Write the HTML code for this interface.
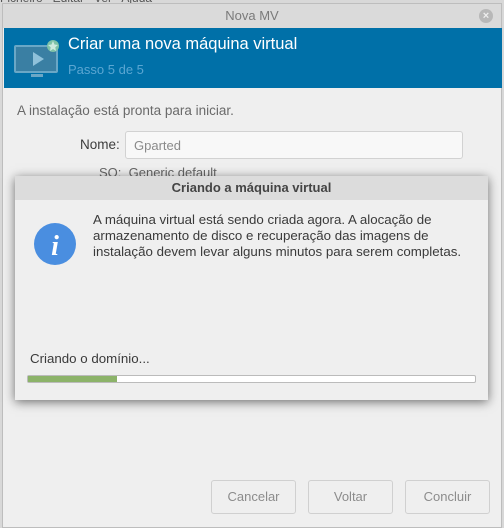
<!DOCTYPE html>
<html><head><meta charset="utf-8"><style>
*{margin:0;padding:0;box-sizing:border-box}
body{width:504px;height:528px;overflow:hidden;background:#d8d8d8;font-family:"Liberation Sans","DejaVu Sans",sans-serif;position:relative;font-size:13px;color:#3c3c3c}
.win{position:absolute;left:2px;top:3px;width:500px;height:525px;background:#efefef;border:1px solid #bdbdbd}
.tb{position:absolute;left:0;top:0;width:100%;height:24px;background:#dadada;text-align:center;line-height:24px;color:#7a7a7a;font-size:13px}
.close{position:absolute;right:8px;top:5px;width:14px;height:14px;border-radius:50%;background:#b8b8b8;color:#eee;font-size:11px;line-height:14px;text-align:center;font-weight:bold}
.hdr{position:absolute;left:1px;top:24px;width:498px;height:60px;background:#0070a8}
.hdr .t{position:absolute;left:64px;top:7px;color:#fff;font-size:16.5px}
.hdr .s{position:absolute;left:64px;top:34px;color:#5aa6d2;font-size:13px}
.lbl{position:absolute;font-size:13px}
.entry{position:absolute;left:125px;top:131px;width:338px;height:28px;background:#f8f8f8;border:1px solid #d2d2d2;border-radius:3px;color:#8a8a8a;padding:6px 8px}
.dlg{position:absolute;left:15px;top:176px;width:473px;height:224px;background:#efefef;box-shadow:0 2px 10px rgba(0,0,0,.55)}
.dt{height:24px;background:#dcdcdc;text-align:center;line-height:24px;font-weight:bold;color:#444;font-size:13px}
.btn{position:absolute;top:480px;width:85px;height:34px;border:1px solid #d0d0d0;border-radius:3px;background:#efefef;color:#8c8c8c;text-align:center;line-height:32px;font-size:13px}
</style></head><body>
<div style="position:absolute;left:0;top:-9px;font-size:12px;color:#555">Ficheiro &nbsp; Editar &nbsp; Ver &nbsp; Ajuda</div>
<div class="win">
<div class="tb">Nova MV<div class="close">×</div></div>
<div class="hdr">
<svg style="position:absolute;left:9px;top:8px" width="48" height="44" viewBox="0 0 48 44">
<rect x="2" y="10" width="42" height="26" rx="1" fill="#3a7fa3" stroke="#6aa7c6" stroke-width="2"/>
<polygon points="20,16 20,30 31,23" fill="#8fc1da"/>
<rect x="18" y="38" width="12" height="3" fill="#6aa7c6"/>
<circle cx="40" cy="10" r="6" fill="#7fc2a8"/>
<polygon points="40,5 41.5,8.5 45,9 42.3,11.3 43,15 40,13 37,15 37.7,11.3 35,9 38.5,8.5" fill="#cfeadf"/>
</svg>
<div class="t">Criar uma nova máquina virtual</div>
<div class="s">Passo 5 de 5</div>
</div>
</div>
<div class="lbl" style="left:17px;top:103px;color:#6a6a6a;font-size:13.5px">A instalação está pronta para iniciar.</div>
<div class="lbl" style="left:80px;top:137px;font-size:13.5px">Nome:</div>
<div class="entry">Gparted</div>
<div class="lbl" style="left:99px;top:165px;color:#666">SO: &nbsp;Generic default</div>
<div class="dlg">
<div class="dt">Criando a máquina virtual</div>
<svg style="position:absolute;left:18px;top:46px" width="44" height="44" viewBox="0 0 44 44"><circle cx="22" cy="22" r="21" fill="#4a8ee0"/><text x="22" y="33" text-anchor="middle" font-family="Liberation Serif,serif" font-style="italic" font-weight="bold" font-size="28" fill="#fff">i</text></svg>
<div style="position:absolute;left:78px;top:36px;line-height:16px;font-size:13.3px;color:#3a3a3a">A máquina virtual está sendo criada agora. A alocação de<br>armazenamento de disco e recuperação das imagens de<br>instalação devem levar alguns minutos para serem completas.</div>
<div style="position:absolute;left:15px;top:175px;font-size:13.3px;color:#3a3a3a">Criando o domínio...</div>
<div style="position:absolute;left:12px;top:199px;width:449px;height:8px;background:#fff;border:1px solid #bbb;border-radius:2px"><div style="width:89px;height:6px;background:#8cb369"></div></div>
</div>
<div class="btn" style="left:211px">Cancelar</div>
<div class="btn" style="left:308px">Voltar</div>
<div class="btn" style="left:405px">Concluir</div>
</body></html>
